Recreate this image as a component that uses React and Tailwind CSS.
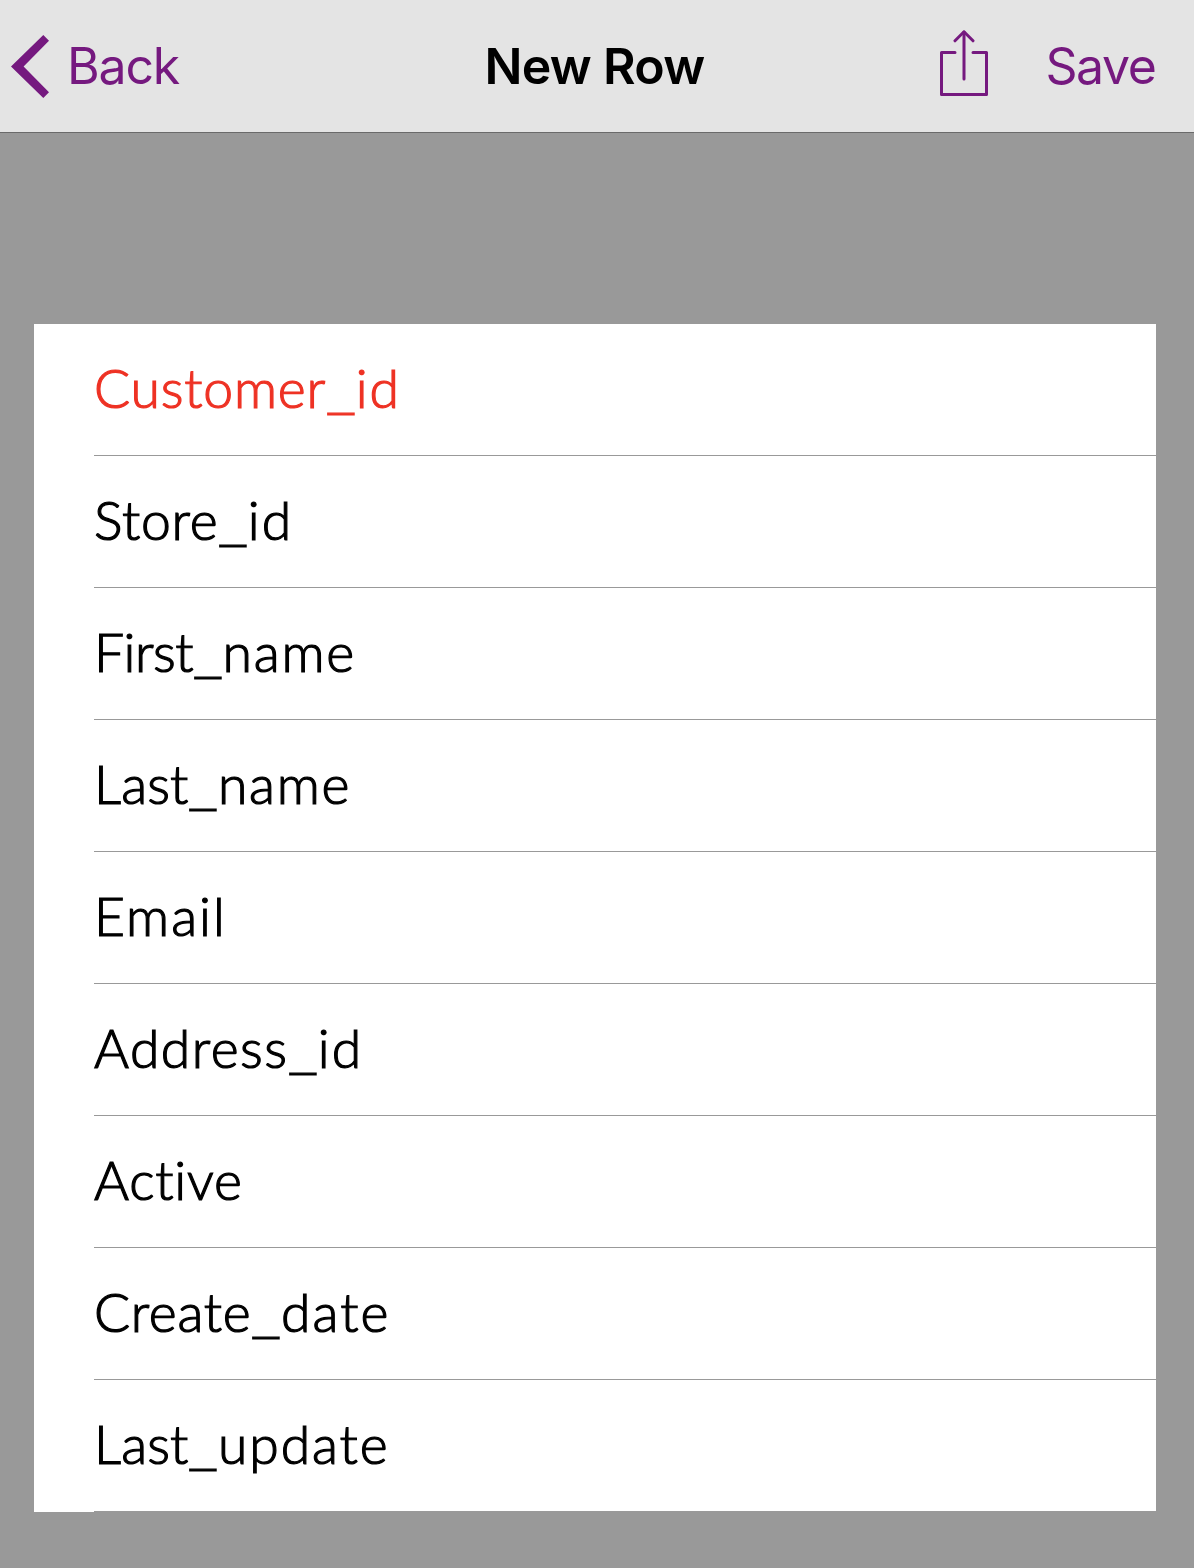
const fields = [
  { name: "Customer_id", color: "text-[#ee3224]", head: "tracking-[0.8px]", tail: "tracking-[2px]" },
  { name: "Store_id", color: "text-black", head: "tracking-[0.7px]", tail: "tracking-[2px]" },
  { name: "First_name", color: "text-black", head: "tracking-[-0.5px]", tail: "tracking-[1.75px]" },
  { name: "Last_name", color: "text-black", head: "tracking-[0.1px]", tail: "tracking-[1.75px]" },
  { name: "Email", color: "text-black", head: "tracking-[2px]", tail: "" },
  { name: "Address_id", color: "text-black", head: "tracking-[1.45px]", tail: "tracking-[2px]" },
  { name: "Active", color: "text-black", head: "tracking-[0.8px]", tail: "" },
  { name: "Create_date", color: "text-black", head: "tracking-[0.75px]", tail: "tracking-[2.1px]" },
  { name: "Last_update", color: "text-black", head: "tracking-[0.1px]", tail: "tracking-[1.9px]" },
];

function BackChevron() {
  return (
    <svg width="40" height="64" viewBox="0 0 40 64" className="mt-px shrink-0" fill="currentColor">
      <path d="M0 31.5 32.3 0l5.7 5.8L12.6 31.5 38 57.2 32.3 63z" />
    </svg>
  );
}

function ShareIcon() {
  return (
    <svg width="48" height="66" viewBox="0 0 48 66" className="shrink-0" fill="none" stroke="currentColor" strokeWidth="3" strokeLinecap="round" strokeLinejoin="round">
      <path d="M15 22.5H1.5v42h45v-42H33" />
      <path d="M24 2v47" />
      <path d="M15 10.8l9-9L33 10.8" />
    </svg>
  );
}

function FieldName({ field }) {
  const [head, tail] = field.name.split("_");
  return (
    <span className={`flex whitespace-pre ${field.color}`}>
      <span className={field.head}>{head}</span>
      {tail && (
        <>
          <span className="inline-block w-[29.5px]">
            <span className="inline-block origin-left scale-x-[1.24]">_</span>
          </span>
          <span className={field.tail}>{tail}</span>
        </>
      )}
    </span>
  );
}

export default function App() {
  return (
    <div className="h-[1568px] w-[1194px] overflow-hidden bg-[#999999]">
      <header className="grid h-[133px] grid-cols-[1fr_auto_1fr] items-center border-b border-[#6a6a6a] bg-[#e4e4e4] font-['Inter',sans-serif] text-[50px] leading-[60px] text-[#75197f]">
        <button className="flex items-center gap-[16px] pl-[11px]">
          <BackChevron />
          <span className="tracking-[-1.2px]">Back</span>
        </button>
        <h1 className="pr-[5px] font-semibold tracking-[-0.7px] text-black">New Row</h1>
        <div className="flex items-center justify-end gap-[57px] pr-[38.5px]">
          <button className="-mt-1.5"><ShareIcon /></button>
          <button className="tracking-[-1.4px]">Save</button>
        </div>
      </header>
      <main className="pt-[191px] pr-[38px] pl-[34px]">
        <ul className="bg-white pl-[60px] font-['Lato',sans-serif] text-[53.5px] leading-[64px] font-light [-webkit-text-stroke:1.2px_currentColor] [font-variant-ligatures:none]">
          {fields.map((f) => (
            <li key={f.name} className="flex h-[132px] items-center border-b border-[#999999] pb-[5px]">
              <FieldName field={f} />
            </li>
          ))}
        </ul>
      </main>
    </div>
  );
}
